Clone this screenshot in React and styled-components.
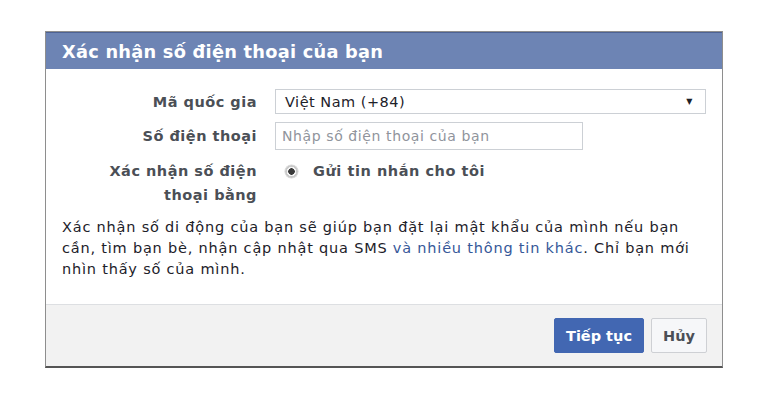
import React from "react";
import styled, { createGlobalStyle } from "styled-components";

const Global = createGlobalStyle`
  html, body { margin: 0; padding: 0; background: #ffffff; }
  body { font-family: "DejaVu Sans", "Liberation Sans", Arial, sans-serif; }
  * { box-sizing: border-box; }
`;

const Page = styled.div`
  padding: 31px 0 0 45px;
  width: 768px;
  height: 400px;
`;

const Dialog = styled.div`
  width: 678px;
  border: 1px solid #8e8e8e;
  border-bottom: 2px solid #555;
  display: flex;
  flex-direction: column;
  background: #fff;
`;

const Header = styled.div`
  height: 37px;
  background: #6d84b4;
  border-top: 1px solid #4d6294;
  display: flex;
  align-items: center;
  padding-left: 16px;
`;

const Title = styled.h1`
  margin: 0;
  color: #fff;
  font-size: 17.8px;
  font-weight: bold;
  letter-spacing: 0.25px;
`;

const Body = styled.div`
  padding: 20px 14px 24px 16px;
  display: flex;
  flex-direction: column;
  gap: 10px;
`;

const Form = styled.div`
  display: grid;
  grid-template-columns: 160px 431px;
  column-gap: 18px;
  row-gap: 8px;
  margin-left: 35px;
  align-items: center;
`;

const Label = styled.div`
  text-align: right;
  font-size: 14.5px;
  font-weight: bold;
  letter-spacing: 0.5px;
  color: #4b4f56;
  line-height: 24px;
  align-self: ${(p) => (p.$top ? "start" : "center")};
  margin-top: ${(p) => (p.$top ? "1px" : "0")};
`;

const SelectBox = styled.div`
  height: 25px;
  border: 1px solid #ccd0d5;
  display: flex;
  align-items: center;
  justify-content: space-between;
  padding: 0 12px 0 9px;
  font-size: 14.5px;
  letter-spacing: 0.5px;
  color: #1d2129;
`;

const Arrow = styled.span`
  font-size: 8px;
  color: #1d2129;
`;

const PhoneInput = styled.input`
  width: 308px;
  height: 28px;
  border: 1px solid #ccd0d5;
  padding: 0 6px;
  font-family: "DejaVu Sans", "Liberation Sans", Arial, sans-serif;
  font-size: 14px;
  letter-spacing: 0.6px;
  color: #1d2129;
  outline: none;
  &::placeholder { color: #90949c; }
`;

const RadioRow = styled.div`
  align-self: start;
  display: flex;
  align-items: center;
  gap: 15px;
  padding-left: 10px;
  height: 24px;
  margin-top: 1px;
`;

const Radio = styled.span`
  width: 13px;
  height: 13px;
  border-radius: 50%;
  background: radial-gradient(circle, #3a3a3a 0 3px, #f4f4f4 3.5px 4.5px, #c9c9c9 5px 6.5px);
  box-shadow: 0 0 0 0.5px #d6d6d6;
`;

const RadioText = styled.span`
  font-size: 14.5px;
  font-weight: bold;
  letter-spacing: 0.55px;
  color: #4b4f56;
`;

const Paragraph = styled.p`
  margin: 0;
  font-size: 14.5px;
  letter-spacing: 0.8px;
  line-height: 21px;
  color: #1d2129;
`;

const Link = styled.a`
  color: #365899;
  text-decoration: none;
`;

const Footer = styled.div`
  border-top: 1px solid #dddfe2;
  background: #f2f2f2;
  height: 62px;
  display: flex;
  justify-content: flex-end;
  align-items: center;
  gap: 7px;
  padding-right: 15px;
`;

const Button = styled.button`
  height: 35px;
  width: ${(p) => (p.$primary ? "90px" : "56px")};
  padding: 0;
  font-family: "DejaVu Sans", "Liberation Sans", Arial, sans-serif;
  font-size: 14.5px;
  font-weight: bold;
  border-radius: 2px;
  border: 1px solid ${(p) => (p.$primary ? "#4267b2" : "#ced0d4")};
  background: ${(p) => (p.$primary ? "#4267b2" : "#f6f7f9")};
  color: ${(p) => (p.$primary ? "#fff" : "#4b4f56")};
  cursor: pointer;
`;

export default function App() {
  return (
    <>
      <Global />
      <Page>
        <Dialog>
          <Header>
            <Title>Xác nhận số điện thoại của bạn</Title>
          </Header>
          <Body>
            <Form>
              <Label>Mã quốc gia</Label>
              <SelectBox>
                <span>Việt Nam (+84)</span>
                <Arrow>▼</Arrow>
              </SelectBox>
              <Label>Số điện thoại</Label>
              <div>
                <PhoneInput placeholder="Nhập số điện thoại của bạn" />
              </div>
              <Label $top>Xác nhận số điện thoại bằng</Label>
              <RadioRow>
                <Radio />
                <RadioText>Gửi tin nhắn cho tôi</RadioText>
              </RadioRow>
            </Form>
            <Paragraph>
              Xác nhận số di động của bạn sẽ giúp bạn đặt lại mật khẩu của mình nếu bạn
              cần, tìm bạn bè, nhận cập nhật qua SMS <Link>và nhiều thông tin khác</Link>. Chỉ bạn mới
              nhìn thấy số của mình.
            </Paragraph>
          </Body>
          <Footer>
            <Button $primary>Tiếp tục</Button>
            <Button>Hủy</Button>
          </Footer>
        </Dialog>
      </Page>
    </>
  );
}
